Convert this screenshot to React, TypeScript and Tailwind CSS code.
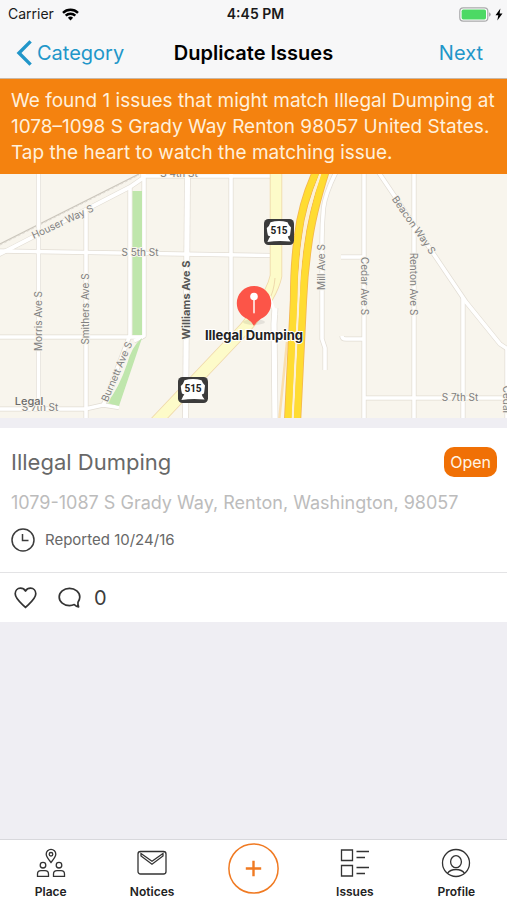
import type { ReactNode } from 'react'

function StatusBar() {
  return (
    <div className="grid h-7 grid-cols-[1fr_auto_1fr] items-center pr-1 pl-2 text-sm text-[#1a1a1a]">
      <div className="flex items-center gap-2">
        <span>Carrier</span>
        <svg width="17" height="13" viewBox="0 0 17 13" fill="none" stroke="#000" strokeWidth="2.4" aria-hidden="true">
          <path d="M1 4.8a10.6 10.6 0 0 1 15 0" />
          <path d="M3.7 7.7a6.8 6.8 0 0 1 9.6 0" />
          <path d="M8.5 12.4 5.9 9.8a3.7 3.7 0 0 1 5.2 0z" fill="#000" stroke="none" />
        </svg>
      </div>
      <span className="font-semibold">4:45 PM</span>
      <div className="flex items-center justify-end gap-1">
        <svg width="32" height="15" viewBox="0 0 32 15" aria-hidden="true">
          <rect x=".8" y=".8" width="28" height="13.4" rx="3.4" fill="#fff" stroke="#a9a9ab" strokeWidth="1.2" />
          <rect x="2.6" y="2.6" width="24.4" height="9.8" rx="1.6" fill="#4cd964" />
          <path d="M30 5.2v4.6q1.8-.8 1.8-2.3T30 5.2z" fill="#a9a9ab" />
        </svg>
        <svg width="8" height="13" viewBox="0 0 8 13" aria-hidden="true">
          <path d="M5.4.6.5 7.3h2.8L2.3 12.4 7.5 5.5H4.6z" fill="#000" />
        </svg>
      </div>
    </div>
  )
}

function NavBar() {
  return (
    <div className="grid h-[51px] grid-cols-[1fr_auto_1fr] items-center border-b border-[#c9b8a6] px-4 text-xl">
      <button type="button" className="flex items-center gap-1 justify-self-start text-[#2196c9]">
        <svg width="17" height="26" viewBox="0 0 17 26" fill="none" stroke="currentColor" strokeWidth="3.4" aria-hidden="true">
          <path d="M14.6 1.4 3 13l11.6 11.6" />
        </svg>
        Category
      </button>
      <h1 className="font-semibold text-black">Duplicate Issues</h1>
      <button type="button" className="justify-self-end px-2 text-[#2196c9]">
        Next
      </button>
    </div>
  )
}

const minorRoads = [
  'M38.5-4V234',
  'M86 36V248',
  'M130 12V161L103 232',
  'M144-4V162L134 167',
  'M0 77 271 81.500',
  'M0 163H143',
  'M-2 235H85L103 231L119 233.500',
  'M144 2H271',
  'M231-4V158',
  'M337-4Q325 20 323.500 34Q322 50 322 65V165L325 174V196',
  'M364-4V248',
  'M341 83H364',
  'M342 162Q342 165 346 165H364',
  'M414-4V248',
  'M377-4 466 128 500 170 512 178',
  'M463 124V248',
  'M364 224H512',
  'M507 174V248',
]

const wideRoads = ['M187.500-4 185.500 248', 'M275 134 274 150 275 248']

const houserWay = 'M-4 82 130 13 143 4V-4'

const streetLabels = [
  { name: 'S 4th St', x: 179, y: 3, angle: 0 },
  { name: 'Houser Way S', x: 64, y: 51, angle: -25 },
  { name: 'S 5th St', x: 140, y: 82, angle: 0 },
  { name: 'Morris Ave S', x: 42, y: 147, angle: -90 },
  { name: 'Smithers Ave S', x: 89, y: 135, angle: -90 },
  { name: 'Burnett Ave S', x: 120, y: 199, angle: -67 },
  { name: 'S 7th St', x: 40, y: 237, angle: 0 },
  { name: 'Mill Ave S', x: 325, y: 93, angle: -90 },
  { name: 'Cedar Ave S', x: 361, y: 112, angle: 90 },
  { name: 'Renton Ave S', x: 410, y: 110, angle: 90 },
  { name: 'Beacon Way S', x: 411, y: 53, angle: 55 },
  { name: 'S 7th St', x: 460, y: 227, angle: 0 },
  { name: 'Cedar', x: 503, y: 226, angle: 90 },
]

function RouteShield({ x, y }: { x: number; y: number }) {
  return (
    <g transform={`translate(${x} ${y})`}>
      <rect x="-15" y="-13" width="30" height="26" rx="4.500" fill="#3b3b3b" />
      <path
        d="M-8.500-9.800Q0-12.400 8.500-9.800Q10-6 12-4.500Q11.500 0 11 3.500L8.800 4.600L9.500 6.500L11.600 9.600Q0 8-11.600 10L-9.800 6L-8.600 4.600L-11 3.500Q-12 0-12.200-4Q-9.500-6-8.500-9.800z"
        fill="#fff"
      />
      <text y="2" textAnchor="middle" className="fill-[#222] font-['Roboto'] text-[10px] font-bold">
        515
      </text>
    </g>
  )
}

function IssueMap() {
  return (
    <svg
      viewBox="0 0 507 244"
      preserveAspectRatio="xMidYMid slice"
      className="block h-[244px] w-full bg-[#f8f5ed]"
      role="img"
      aria-label="Map of the reported issue"
    >
      <g fill="none" strokeLinejoin="round">
        <path d="M0 70 139 0" stroke="#cbc6bc" strokeWidth="1.200" />
        <path d="M0 71 139 1" stroke="#dedad2" strokeWidth="1" strokeDasharray="3 2" />
        {minorRoads.map((d) => (
          <path key={d} d={d} stroke="#e2ddd4" strokeWidth="5" />
        ))}
        <path d={houserWay} stroke="#e2ddd4" strokeWidth="5" />
        {wideRoads.map((d) => (
          <path key={d} d={d} stroke="#e2ddd4" strokeWidth="6.600" />
        ))}
        {minorRoads.map((d) => (
          <path key={d} d={d} stroke="#fff" strokeWidth="3.600" />
        ))}
        <path d={houserWay} stroke="#fff" strokeWidth="3.800" />
        {wideRoads.map((d) => (
          <path key={d} d={d} stroke="#fff" strokeWidth="5.200" />
        ))}
        <path d="M132.500 17H142V161H132.500z" fill="#bfe6ac" />
        <path d="M142 164 119 232 107 229Q119 214 127 190Q132 172 142 164z" fill="#bfe6ac" />
        <path d="M287 168 279 248" stroke="#fadfae" strokeWidth="2.500" />
        <path d="M276-4V102Q272 122 245 154L154 250" stroke="#efd9ac" strokeWidth="12.500" />
        <path d="M276-4V102Q272 122 245 154L154 250" stroke="#fdfbc9" strokeWidth="10.800" />
        <path d="M275 104Q274 118 268 128" stroke="#efd9ac" strokeWidth="1" />
        <path d="M269 122 276 141" stroke="#fff" strokeWidth="3" />
        <path d="M317-4Q302 28 298 62Q294 90 294 126L288 248" stroke="#f3b54f" strokeWidth="8.200" />
        <path d="M326-4Q312 40 308 72Q304 100 303 126L297 248" stroke="#f3b54f" strokeWidth="8.200" />
        <path d="M322-4Q307 34 303 67Q299 95 298.500 126L292.500 248" stroke="#fdf1d4" strokeWidth="2.600" />
        <path d="M317-4Q302 28 298 62Q294 90 294 126L288 248" stroke="#ffdc32" strokeWidth="6.600" />
        <path d="M326-4Q312 40 308 72Q304 100 303 126L297 248" stroke="#ffdc32" strokeWidth="6.600" />
      </g>
      <g
        textAnchor="middle"
        stroke="#f8f5ed"
        strokeWidth="2"
        paintOrder="stroke"
        className="fill-[#808080] text-[10px]"
      >
        {streetLabels.map((label) => (
          <text key={`${label.name}${label.x}`} transform={`translate(${label.x} ${label.y}) rotate(${label.angle})`}>
            {label.name}
          </text>
        ))}
        <text transform="translate(190 126) rotate(-90)" className="fill-[#555] text-[11px] font-bold">
          Williams Ave S
        </text>
        <text x="29" y="231" className="fill-[#6b6b6b] text-[11px] font-medium">
          Legal
        </text>
      </g>
      <RouteShield x={279} y={58} />
      <RouteShield x={193} y={216} />
      <ellipse cx="254" cy="148" rx="11" ry="3" fill="#000" opacity=".08" />
      <path
        d="M254 112a17.200 17.200 0 0 1 17.200 17.200c0 8-5 13-10.200 15.600Q257 147 254 152Q251 147 247 144.800c-5.200-2.600-10.200-7.600-10.200-15.600A17.200 17.200 0 0 1 254 112z"
        fill="#fc5548"
      />
      <path d="M254 124V138.500" stroke="#ffd2cc" strokeWidth="2" strokeLinecap="round" />
      <circle cx="254" cy="122.500" r="3.800" fill="#fff" />
      <text
        x="254"
        y="166"
        textAnchor="middle"
        stroke="#fff"
        strokeWidth="2"
        paintOrder="stroke"
        className="fill-[#222] text-[13px] font-bold"
      >
        Illegal Dumping
      </text>
    </svg>
  )
}

function IssueCard() {
  return (
    <article className="bg-white">
      <div className="flex flex-col gap-2 px-[11px] pt-[18px] pb-5">
        <div className="flex items-center justify-between">
          <h2 className="text-[22px] leading-8 text-[#686868]">Illegal Dumping</h2>
          <span className="-mr-px rounded-[10px] bg-[#f07005] px-[6px] py-1 text-base leading-[22px] text-[#fff4e6]">Open</span>
        </div>
        <p className="text-lg leading-[34px] text-[#bcbcbc]">1079-1087 S Grady Way, Renton, Washington, 98057</p>
        <div className="flex items-center gap-[10px] text-[15px] leading-6 text-[#686868]">
          <svg width="24" height="24" viewBox="0 0 24 24" fill="none" stroke="#3c3c3c" strokeWidth="1.500" aria-hidden="true">
            <circle cx="12" cy="12" r="11" />
            <path d="M11.500 6v6.500h6" />
          </svg>
          <span>Reported 10/24/16</span>
        </div>
      </div>
      <div className="flex h-[50px] items-center gap-[21px] border-t border-[#e3e3e5] px-[14px] text-[#3c3c3c]">
        <button type="button" aria-label="Watch this issue">
          <svg width="23" height="22" viewBox="0 0 23 22" fill="none" stroke="#333" strokeWidth="1.700" strokeLinejoin="round" aria-hidden="true">
            <path d="M11.500 20.500C8 16.800 1.200 12 1.200 6.800C1.200 3.500 3.500 1.200 6.400 1.200C8.800 1.200 10.600 2.500 11.500 4C12.400 2.500 14.200 1.200 16.600 1.200C19.500 1.200 21.800 3.500 21.800 6.800C21.800 12 15 16.800 11.500 20.500z" />
          </svg>
        </button>
        <button type="button" className="flex items-center gap-[13px] text-xl" aria-label="0 comments">
          <svg width="23" height="22" viewBox="0 0 23 22" fill="none" stroke="#333" strokeWidth="1.700" strokeLinejoin="round" aria-hidden="true">
            <path d="M20 15.200C21.100 13.600 21.800 11.800 21.800 10C21.800 5.200 17.200 1.400 11.500 1.400S1.200 5.200 1.200 10S5.800 18.600 11.500 18.600C13.300 18.600 15 18.200 16.300 17.600Q18.500 19.500 20.600 19.900Q19.600 17.800 20 15.200z" />
          </svg>
          <span>0</span>
        </button>
      </div>
    </article>
  )
}

function TabButton({ label, children }: { label: string; children: ReactNode }) {
  return (
    <button type="button" className="flex flex-col items-center gap-[6px] pt-2 text-xs leading-4 font-semibold text-[#222]">
      <svg width="30" height="30" viewBox="0 0 30 30" fill="none" stroke="#333" strokeWidth="1.300" aria-hidden="true">
        {children}
      </svg>
      {label}
    </button>
  )
}

function TabBar() {
  return (
    <nav className="grid h-[61px] grid-cols-5 border-t border-[#d8d8dc] bg-white">
      <TabButton label="Place">
        <path d="M15 14.500Q10.200 8.500 10.200 6.200A4.800 4.800 0 0 1 19.800 6.200Q19.800 8.500 15 14.500z" />
        <circle cx="15" cy="6.300" r="1.800" />
        <circle cx="7" cy="17.200" r="2.800" />
        <circle cx="23" cy="17.200" r="2.800" />
        <path d="M1.500 28.300V26Q1.500 22.600 5 22.600H9Q12.500 22.600 12.500 26V28.300z" />
        <path d="M17.500 28.300V26Q17.500 22.600 21 22.600H25Q28.500 22.600 28.500 26V28.300z" />
      </TabButton>
      <TabButton label="Notices">
        <rect x="1" y="3.500" width="28" height="22.500" rx="2.500" />
        <path d="M4 5.500 15 13.300 26 5.500V8L15 16.200 4 8z" />
      </TabButton>
      <button type="button" aria-label="Report an issue" className="flex justify-center pt-[3px]">
        <svg width="51" height="51" viewBox="0 0 51 51" fill="none" stroke="#f07a22" aria-hidden="true">
          <circle cx="25.500" cy="25.500" r="24.600" strokeWidth="1.500" />
          <path d="M25.500 17.800V33.200M17.800 25.500H33.200" strokeWidth="2.400" />
        </svg>
      </button>
      <TabButton label="Issues">
        <path d="M1.500 2H12.500V12.500H1.500zM1.500 17.500H12.500V28H1.500z" />
        <path d="M16.500 3.500H29M16.500 9.500H25M16.500 19.500H29M16.500 25.500H25" />
      </TabButton>
      <TabButton label="Profile">
        <circle cx="15" cy="15" r="13.500" />
        <ellipse cx="15" cy="13.700" rx="5.400" ry="6" />
        <path d="M6.500 25.300Q9 21.500 15 21.500T23.500 25.300" />
      </TabButton>
    </nav>
  )
}

export default function App() {
  return (
    <div className="flex min-h-screen flex-col bg-[#efeef3] font-['Inter','Liberation_Sans',sans-serif]">
      <header className="bg-[#f7f7f8]">
        <StatusBar />
        <NavBar />
      </header>
      <p className="bg-[#f4820f] px-[11px] pt-[9px] pb-2 text-[19px] leading-[26px] text-[#fff0dc]">
        We found 1 issues that might match Illegal Dumping at 1078–1098 S Grady Way Renton 98057 United States. Tap the heart to
        watch the matching issue.
      </p>
      <main className="flex grow flex-col gap-[10px]">
        <IssueMap />
        <IssueCard />
      </main>
      <TabBar />
    </div>
  )
}
